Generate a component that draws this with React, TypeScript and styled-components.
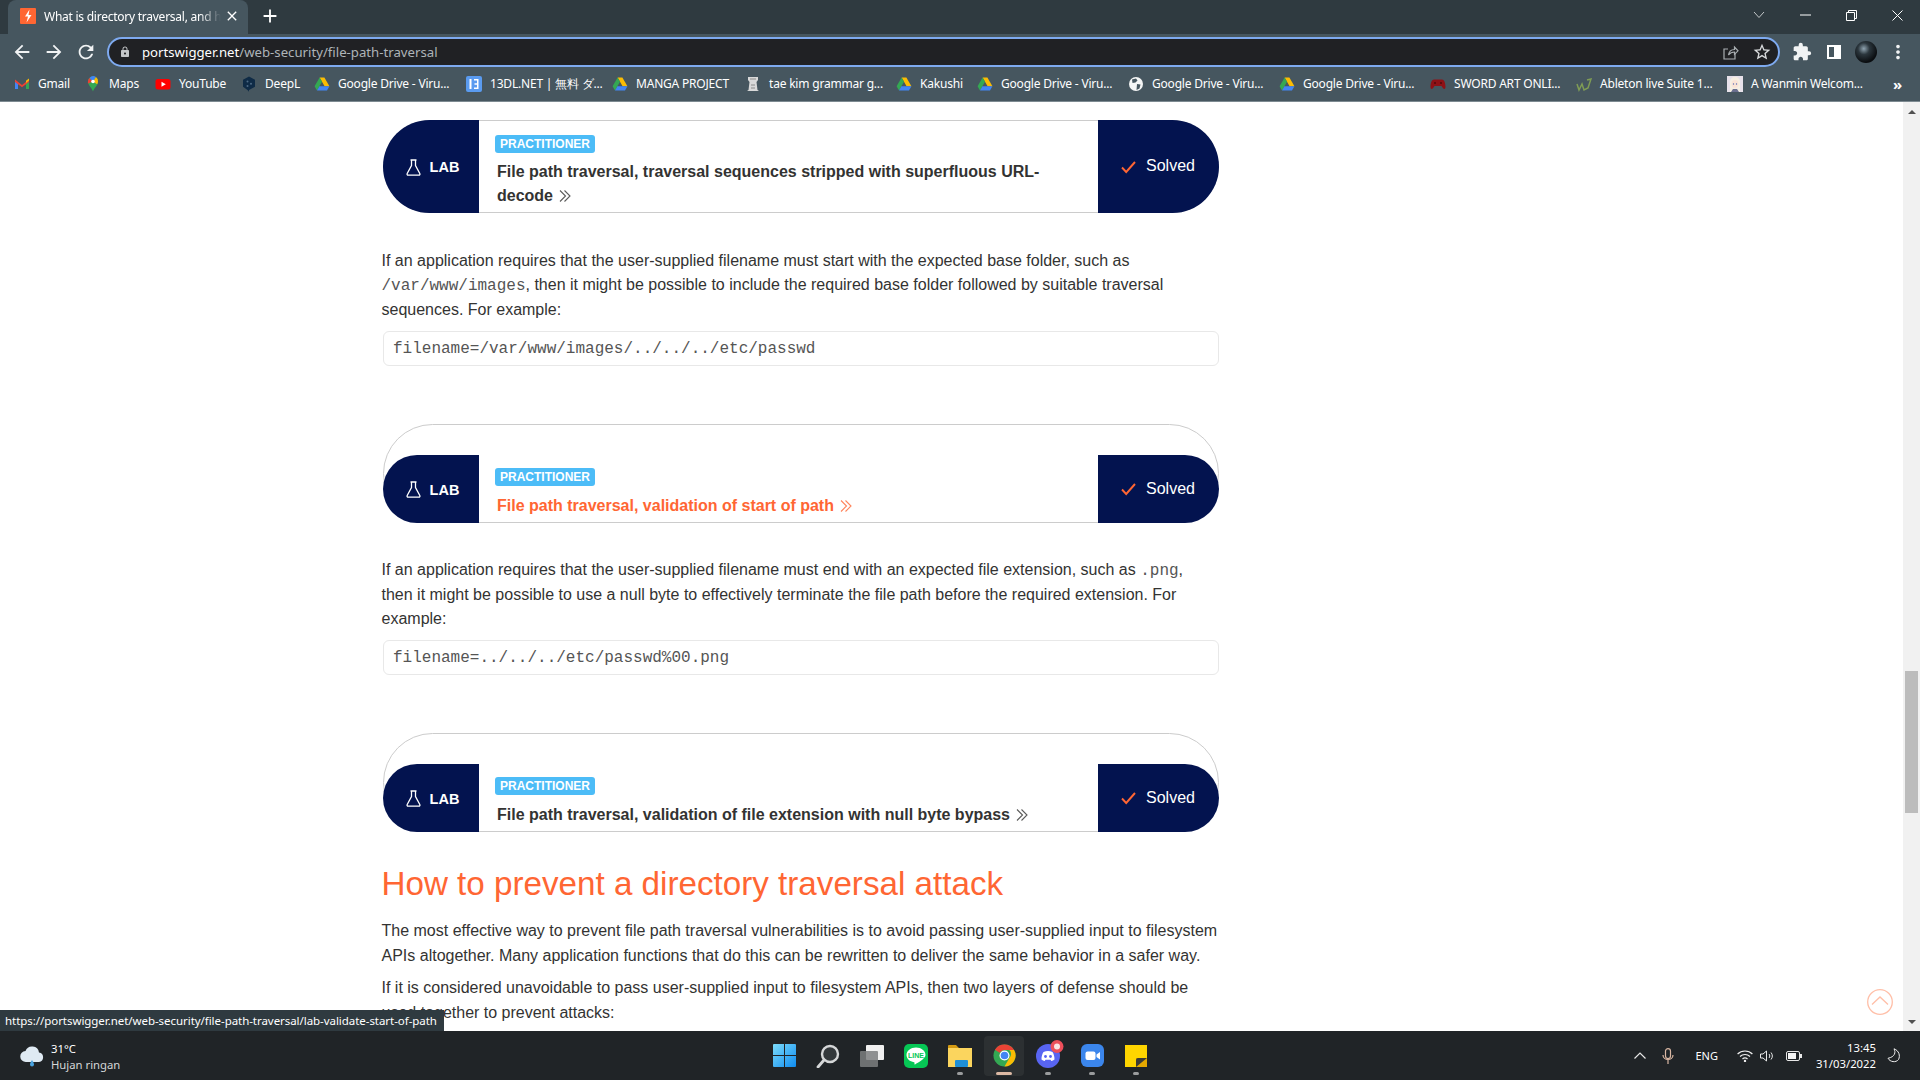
import styled, { createGlobalStyle } from 'styled-components';
import { MdArrowBack, MdArrowForward, MdRefresh, MdLock, MdStarBorder, MdExtension, MdMoreVert, MdClose, MdAdd } from 'react-icons/md';

const GlobalStyle = createGlobalStyle`
  html, body { margin: 0; padding: 0; background: #fff; }
  * { box-sizing: border-box; }
`

const uiFont = `"Noto Sans", "Open Sans", sans-serif`

const Screen = styled.div`
  width: 100%;
  height: 100vh;
  display: flex;
  flex-direction: column;
  overflow: hidden;
`

/* browser chrome */
const TabStrip = styled.div`
  height: 34px;
  flex: none;
  background: #2f3a40;
  display: flex;
  align-items: flex-end;
  padding-left: 8px;
  color: #fff;
  font: 12px ${uiFont};
`
const Tab = styled.div`
  width: 240px;
  height: 34px;
  background: #46565f;
  border-radius: 8px 8px 0 0;
  display: flex;
  align-items: center;
  padding: 0 8px 2px 12px;
  gap: 8px;
`
const TabTitle = styled.span`
  flex: 1;
  margin-right: -5px;
  white-space: nowrap;
  overflow: hidden;
  letter-spacing: -0.25px;
  -webkit-mask-image: linear-gradient(90deg, #000 88%, transparent);
  mask-image: linear-gradient(90deg, #000 88%, transparent);
`
const NewTab = styled.div`
  width: 22px;
  height: 34px;
  margin-left: 11px;
  display: flex;
  align-items: center;
  justify-content: center;
  font-size: 20px;
  padding-bottom: 2px;
`
const WindowControls = styled.div`
  margin-left: auto;
  height: 34px;
  display: flex;
  align-items: center;
  padding-bottom: 4px;
`
const WindowButton = styled.div`
  width: 46px;
  display: flex;
  justify-content: center;
  align-items: center;
`
const Toolbar = styled.div`
  height: 34px;
  flex: none;
  background: #46565f;
  display: flex;
  align-items: center;
  color: #fff;
  padding: 2px 0 0 6px;
`
const NavButton = styled.div`
  width: 32px;
  display: flex;
  justify-content: center;
  align-items: center;
  font-size: 22px;
  color: #f1f3f4;
`
const AddressBar = styled.div`
  width: 1673px;
  height: 30px;
  margin-left: 5px;
  border: 2px solid #7eaaf0;
  border-radius: 15px;
  background: #202124;
  display: flex;
  align-items: center;
  padding: 0 6px 0 10px;
  font: 13.2px ${uiFont};
  color: #aeb4b8;
`
const LockIcon = styled.span`
  display: flex;
  font-size: 12px;
  color: #c4c7c9;
  margin-right: 11px;
`
const UrlHost = styled.span`
  color: #fff;
`
const AddressActions = styled.div`
  margin-left: auto;
  display: flex;
  align-items: center;
  gap: 13px;
  color: #d8dadc;
  font-size: 20px;
`
const ToolActions = styled.div`
  display: flex;
  align-items: center;
  margin-left: 6px;
`
const Avatar = styled.div`
  width: 22px;
  height: 22px;
  border-radius: 50%;
  background: radial-gradient(circle at 40% 35%, #8fa3b0 0, #2b363d 30%, #0a0d10 70%);
`
const BookmarksBar = styled.div`
  height: 34px;
  flex: none;
  background: #46565f;
  display: flex;
  align-items: center;
  padding: 0 0 2px 14px;
  gap: 16px;
  border-bottom: 1px solid #7d8a91;
  color: #fff;
  font: 12px ${uiFont};
`
const Bookmark = styled.div`
  display: flex;
  align-items: center;
  gap: 8px;
`
const BookmarkLabel = styled.span<{ $w: number }>`
  width: ${({ $w }) => $w}px;
  white-space: nowrap;
  letter-spacing: -0.2px;
`
const MoreBookmarks = styled.span`
  margin-left: 16px;
  font-size: 15px;
  font-weight: 700;
`

/* page */
const Body = styled.div`
  flex: 1;
  min-height: 0;
  display: flex;
  position: relative;
`
const Main = styled.main`
  flex: 1;
  min-width: 0;
  overflow: hidden;
  padding: 18px 0 0 381.5px;
  background: #fff;
`
const Column = styled.div`
  width: 837px;
  color: #333332;
  font: 16px/24.4px "Liberation Sans", Arial, sans-serif;
`
const Card = styled.div<{ $first?: boolean }>`
  margin: ${({ $first }) => ($first ? 0 : 58)}px -0.5px 0 1.5px;
  height: ${({ $first }) => ($first ? 93 : 99)}px;
  border: 1px solid #ccc;
  border-radius: 50px;
  background: #fff;
  display: flex;
  align-items: ${({ $first }) => ($first ? 'stretch' : 'flex-end')};
`
const CardRow = styled.div<{ $first?: boolean }>`
  width: calc(100% + 2px);
  margin: ${({ $first }) => ($first ? -1 : 0)}px -1px -1px;
  display: flex;
  align-items: stretch;
`
const LabTag = styled.div`
  width: 96px;
  flex: none;
  background: #03134f;
  border-radius: 50px 0 0 50px;
  color: #fff;
  display: flex;
  align-items: center;
  justify-content: center;
  gap: 9px;
  padding: 1px 0 0 3px;
  font-size: 14.5px;
  font-weight: 700;
`
const SolvedTag = styled.div`
  width: 121px;
  flex: none;
  background: #03134f;
  border-radius: 0 50px 50px 0;
  color: #fff;
  display: flex;
  align-items: center;
  gap: 10px;
  padding-left: 23px;
  font-size: 16px;
`
const CardBody = styled.div<{ $first?: boolean }>`
  flex: 1;
  padding: ${({ $first }) => ($first ? '15px 40px 4px 16px' : '13px 40px 5px 16px')};
`
const Badge = styled.span`
  display: block;
  width: 100px;
  height: 18px;
  background: #4cbcf7;
  border-radius: 3px;
  color: #fff;
  font-size: 12px;
  font-weight: 700;
  line-height: 18px;
  text-align: center;
`
const CardTitle = styled.a<{ $active?: boolean; $first?: boolean }>`
  display: block;
  margin: ${({ $first }) => ($first ? 7 : 8)}px 0 0 2px;
  font-weight: 700;
  font-size: 16px;
  line-height: 24px;
  color: ${({ $active }) => ($active ? '#ff6633' : '#333332')};
`
const Chevrons = styled.svg`
  width: 14px;
  height: 14px;
  margin-left: 5px;
  vertical-align: -2px;
  fill: none;
  stroke: currentColor;
  stroke-width: 1.1;
  opacity: 0.8;
`
const Para = styled.p<{ $after?: number }>`
  margin: ${({ $after }) => $after ?? 0}px 0 0;
`
const InlineCode = styled.code`
  font: 16px "Liberation Mono", "Courier New", monospace;
  color: #555;
`
const CodeBox = styled.pre`
  margin: 9px -0.5px 0 1.5px;
  height: 35px;
  border: 1px solid #e8e8e8;
  border-radius: 6px;
  padding: 0 9px;
  font: 16px/35px "Liberation Mono", "Courier New", monospace;
  color: #555;
`
const Heading = styled.h2`
  margin: 30px 0 0;
  font-size: 33.2px;
  line-height: 44px;
  font-weight: 400;
  color: #ff6633;
`

const ScrollBar = styled.div`
  width: 17px;
  flex: none;
  background: #f1f1f1;
  display: flex;
  flex-direction: column;
  align-items: center;
  justify-content: space-between;
  padding: 8px 0 7px;
`
const ScrollThumb = styled.div`
  width: 13px;
  height: 142px;
  background: #bcbcbc;
  margin-top: 557px;
  margin-bottom: auto;
`
const ArrowUp = styled.div`
  width: 0;
  height: 0;
  border: 4.5px solid transparent;
  border-top: 0;
  border-bottom: 4px solid #505050;
`
const ArrowDown = styled.div`
  width: 0;
  height: 0;
  border: 4.5px solid transparent;
  border-bottom: 0;
  border-top: 4px solid #505050;
`
const StatusBubble = styled.div`
  position: absolute;
  left: 0;
  bottom: 0;
  height: 21px;
  width: 444px;
  background: #2f3a40;
  color: #fff;
  font: 11.5px/21px ${uiFont};
  padding-left: 5px;
  white-space: nowrap;
  letter-spacing: -0.05px;
`
const BackToTop = styled.svg`
  position: absolute;
  right: 27px;
  bottom: 16px;
  width: 26px;
  height: 26px;
  fill: none;
  stroke: #ffbfa8;
  stroke-width: 1.3;
`

/* windows taskbar */
const Taskbar = styled.footer`
  height: 49px;
  flex: none;
  background: #202427;
  color: #fff;
  display: grid;
  grid-template-columns: 1fr auto 1fr;
  align-items: center;
  font: 11px ${uiFont};
`
const Weather = styled.div`
  display: flex;
  align-items: center;
  gap: 7px;
  padding-left: 20px;
`
const WeatherText = styled.div`
  line-height: 16px;
  margin-top: 2px;
  font-size: 11.3px;
`
const WeatherSub = styled.div`
  color: #d4d6d7;
`
const TaskIcons = styled.div`
  display: flex;
  align-items: center;
  gap: 4px;
`
const TaskIcon = styled.div<{ $active?: boolean; $open?: boolean }>`
  width: 40px;
  height: 40px;
  margin-top: 1px;
  border-radius: 4px;
  position: relative;
  display: flex;
  align-items: center;
  justify-content: center;
  padding-bottom: 1px;
  background: ${({ $active }) => ($active ? '#2c3032' : 'transparent')};
  &::after {
    content: '';
    display: ${({ $open }) => ($open ? 'block' : 'none')};
    position: absolute;
    bottom: 1px;
    left: 50%;
    transform: translateX(-50%);
    width: ${({ $active }) => ($active ? 16 : 6)}px;
    height: 3px;
    border-radius: 2px;
    background: ${({ $active }) => ($active ? '#dcb9a4' : '#9a9c9d')};
  }
`
const Tray = styled.div`
  display: flex;
  align-items: center;
  justify-content: flex-end;
  padding-right: 20px;
  font-size: 11.5px;
`
const TrayIcon = styled.div<{ $gap: number }>`
  display: flex;
  margin-left: ${({ $gap }) => $gap}px;
`
const TrayLabel = styled.span`
  margin-left: 21px;
  font-size: 11px;
`
const Clock = styled.div`
  margin-left: 14px;
  text-align: right;
  line-height: 16px;
  font-size: 11.3px;
`

const Drive = () => (
  <svg width="16" height="16" viewBox="0 0 16 16">
    <path d="M5.6 1.5h4.8l5 8.7h-4.8z" fill="#fbbc04" />
    <path d="M5.6 1.5 .6 10.2l2.4 4.2 5-8.7z" fill="#34a853" />
    <path d="M3 14.4h10l2.4-4.2H5.4z" fill="#4285f4" />
  </svg>
)
const Gmail = () => (
  <svg width="16" height="16" viewBox="0 0 16 16">
    <path d="M1 4v9h3V7z" fill="#4285f4" />
    <path d="M15 4v9h-3V7z" fill="#34a853" />
    <path d="M1 3.5 8 9l7-5.5V6L8 11.3 1 6z" fill="#ea4335" />
    <path d="M12 7 15 4.500V2.500L12 4.800z" fill="#fbbc04" />
  </svg>
)
const MapsPin = () => (
  <svg width="16" height="16" viewBox="0 0 16 16">
    <path d="M8 15.500C7 12 3 9.500 3 5.500a5 5 0 0 1 10 0c0 4-4 6.500-5 10z" fill="#34a853" />
    <path d="M4.500 2 8 5.500 3 7.500c-.4-2.300.2-4.200 1.500-5.500z" fill="#ea4335" />
    <path d="M4.500 2A5 5 0 0 1 11 1l-3 4.500z" fill="#4285f4" />
    <path d="M11 1a5 5 0 0 1 2 4.500c0 1-.4 2-.8 2.800L8 5.500z" fill="#fbbc04" />
    <circle cx="8" cy="5.500" r="1.800" fill="#fff" />
  </svg>
)
const YouTube = () => (
  <svg width="16" height="16" viewBox="0 0 16 16">
    <rect x="0.500" y="3" width="15" height="10.500" rx="2.500" fill="#f00" />
    <path d="M6.500 5.800v5l4.300-2.500z" fill="#fff" />
  </svg>
)
const DeepL = () => (
  <svg width="16" height="16" viewBox="0 0 16 16">
    <path d="M8 .5 14 3.800v7L8 14v1.800L6.500 14 2 10.800v-7z" fill="#0f2b46" />
    <circle cx="6.500" cy="5.500" r="1" fill="#4d6a85" />
    <circle cx="6.500" cy="10" r="1" fill="#4d6a85" />
    <circle cx="10" cy="7.800" r="1" fill="#4d6a85" />
  </svg>
)
const ThirteenDl = () => (
  <svg width="16" height="16" viewBox="0 0 16 16">
    <rect width="16" height="16" rx="2" fill="#5a9bf0" />
    <path d="M3.500 3h2v10h-2zM8 3h4.500v10H8v-1.500h3V8.700H8.500V7.300H11V4.500H8z" fill="#fff" />
  </svg>
)
const TaeKim = () => (
  <svg width="16" height="16" viewBox="0 0 16 16">
    <path d="M3 1h10v3l-1.500 2 1 8 1.500 1H2l1.500-1 1-8L3 4z" fill="#d9d9d9" />
    <path d="M5 3h6M6 9h4M6 12h4" stroke="#8a8a8a" />
  </svg>
)
const Globe = () => (
  <svg width="16" height="16" viewBox="0 0 16 16">
    <circle cx="8" cy="8" r="7" fill="#f4f5f5" />
    <path d="M4 3.500 8 2.500l1.500 2-2 2-3 .500zM9 8l3.500.5-1 4-3 1.500z" fill="#46565f" />
  </svg>
)
const Gamepad = () => (
  <svg width="16" height="16" viewBox="0 0 16 16">
    <path d="M4 3.500h8c2 0 3.500 3 3.500 7.500 0 2.500-2 2.500-3 .500l-1-1.500h-7l-1 1.500c-1 2-3 2-3-.500C.5 6.500 2 3.500 4 3.500z" fill="#8f1116" />
    <circle cx="5" cy="7" r="1" fill="#4f0a0c" />
    <circle cx="11" cy="7" r="1" fill="#4f0a0c" />
  </svg>
)
const Ableton = () => (
  <svg width="16" height="16" viewBox="0 0 16 16" fill="none" stroke="#7f9c55" strokeWidth="1.500">
    <path d="M1 8l2 6 3-6 2 6 4-2 3-9-4 1" />
  </svg>
)
const AnimeThumb = () => (
  <svg width="16" height="16" viewBox="0 0 16 16">
    <rect width="16" height="16" fill="#e6e1ea" />
    <path d="M3 16V6c0-3 2-5 5-5s5 2 5 5v10z" fill="#f6efe3" />
    <ellipse cx="8" cy="8" rx="3.500" ry="4" fill="#fbe4d6" />
    <circle cx="6.500" cy="8" r=".7" fill="#5a6fb5" />
    <circle cx="9.500" cy="8" r=".7" fill="#5a6fb5" />
    <path d="M4 16l2-3h4l2 3z" fill="#6a6f8f" />
  </svg>
)
const TabIcon = () => (
  <svg width="16" height="16" viewBox="0 0 16 16">
    <rect width="16" height="16" rx="1" fill="#ff6633" />
    <path d="M9.500 1.500 5 8.500h3L6.500 14.500 11.500 7H8.500z" fill="#fff" />
  </svg>
)
const ShareIcon = () => (
  <svg width="17" height="17" viewBox="0 0 17 17" fill="none" stroke="#a9aeb1" strokeWidth="1.200">
    <path d="M13 9.500V15H2V5h4" />
    <path d="M6.500 11c.5-3.500 3-5.500 6-5.500V3l3.500 3.800-3.500 3.500V8c-2.500 0-4.500 1-6 3z" />
  </svg>
)
const SidePanelIcon = () => (
  <svg width="14" height="14" viewBox="0 0 14 14">
    <path d="M0 0h14v14H0zM2 2v10h5V2z" fill="#fff" fillRule="evenodd" />
  </svg>
)
const Flask = () => (
  <svg width="15" height="17" viewBox="0 0 15 17" fill="none" stroke="#fff" strokeWidth="1.300">
    <path d="M4.500 1h6M5.500 1v5.500L1.200 14.500c-.4.800 0 1.700 1 1.700h10.600c1 0 1.400-.9 1-1.700L9.500 6.500V1" />
  </svg>
)
const Check = () => (
  <svg width="15" height="14" viewBox="0 0 15 14" fill="none" stroke="#ff6633" strokeWidth="1.900">
    <path d="M1 7.500 5.200 12 14 2" />
  </svg>
)
const DoubleChevron = () => (
  <Chevrons viewBox="0 0 14 14">
    <path d="M2 1.500 7.500 7 2 12.500M6.500 1.500 12 7l-5.500 5.500" />
  </Chevrons>
)
const CloudRain = () => (
  <svg width="24" height="26" viewBox="0 0 24 26">
    <path d="M6 19a5.500 5.500 0 0 1-.5-11A7 7 0 0 1 19 9.500 4.800 4.800 0 0 1 19 19z" fill="#dfeaf3" />
    <path d="M12 17c1.500 2.500 2 3.500 2 4.500a2 2 0 0 1-4 0c0-1 .5-2 2-4.500z" fill="#4aa3df" />
  </svg>
)
const WinLogo = () => (
  <svg width="23" height="23" viewBox="0 0 23 23">
    <defs>
      <linearGradient id="win" x1="0" y1="0" x2="1" y2="1">
        <stop offset="0" stopColor="#7cdcfb" />
        <stop offset="1" stopColor="#0f8cf0" />
      </linearGradient>
    </defs>
    <path d="M1 0h10v11H0V1a1 1 0 0 1 1-1zM12 0h10a1 1 0 0 1 1 1v10H12zM0 12h11v11H1a1 1 0 0 1-1-1zM12 12h11v10a1 1 0 0 1-1 1H12z" fill="url(#win)" />
  </svg>
)
const SearchGlass = () => (
  <svg width="24" height="24" viewBox="0 0 24 24" fill="none">
    <circle cx="14" cy="10" r="8" stroke="#d5d7d8" strokeWidth="2.400" fill="#33383b" />
    <path d="M8 16 2 23" stroke="#d5d7d8" strokeWidth="2.800" strokeLinecap="round" />
  </svg>
)
const TaskView = () => (
  <svg width="24" height="22" viewBox="0 0 24 22">
    <rect x="6" y="0" width="18" height="15" rx="1" fill="#f0f0f0" />
    <rect x="0" y="6" width="18" height="16" rx="1" fill="#7d7f80" fillOpacity="0.85" />
  </svg>
)
const LineApp = () => (
  <svg width="24" height="24" viewBox="0 0 24 24">
    <rect width="24" height="24" rx="5" fill="#06c755" />
    <path d="M12 3.500c-5.200 0-9.500 3.300-9.500 7.500 0 3.700 3.300 6.600 7.500 7.200.7.100.6.700.4 1.800 0 .6.400.6 1 .2 2.200-1.300 10.100-5.500 10.100-9.200 0-4.200-4.300-7.500-9.500-7.500z" fill="#fff" />
    <text x="12" y="13.500" fontSize="7" fontWeight="700" fill="#06c755" textAnchor="middle" fontFamily="Liberation Sans">LINE</text>
  </svg>
)
const Explorer = () => (
  <svg width="24" height="22" viewBox="0 0 24 22">
    <path d="M0 1a1 1 0 0 1 1-1h7l3 3h13v3H0z" fill="#d49a12" />
    <rect y="3" width="24" height="19" fill="#fbd55e" />
    <rect x="7" y="15" width="13" height="7" rx="1" fill="#1f8fd6" />
  </svg>
)
const ChromeLogo = () => (
  <svg width="23" height="23" viewBox="0 0 48 48">
    <circle cx="24" cy="24" r="23" fill="#34a853" />
    <path d="M24 1a23 23 0 0 1 20 11.500H24a11.500 11.500 0 0 0-10 5.800L4 12A23 23 0 0 1 24 1z" fill="#ea4335" />
    <path d="M44 12.500A23 23 0 0 1 24 47l10-17.500a11.500 11.500 0 0 0 0-17z" fill="#fbbc04" />
    <circle cx="24" cy="24" r="10.500" fill="#fff" />
    <circle cx="24" cy="24" r="8" fill="#4285f4" />
  </svg>
)
const DiscordApp = () => (
  <svg width="24" height="24" viewBox="0 0 24 24" overflow="visible">
    <circle cx="12" cy="12" r="12" fill="#5865f2" />
    <path d="M7.500 8c3-1.300 6-1.300 9 0 1.300 2 2 4.500 2 7.500-1 .8-2 1.300-3.200 1.600l-.8-1.300h-5l-.8 1.300c-1.200-.3-2.200-.8-3.200-1.600 0-3 .7-5.500 2-7.500z" fill="#fff" />
    <circle cx="9.500" cy="12.500" r="1.400" fill="#5865f2" />
    <circle cx="14.500" cy="12.500" r="1.400" fill="#5865f2" />
    <circle cx="21" cy="2.500" r="6.500" fill="#ed4f5a" />
    <circle cx="21" cy="2.500" r="3" fill="#fbe4e4" />
  </svg>
)
const ZoomApp = () => (
  <svg width="23" height="23" viewBox="0 0 23 23">
    <rect width="23" height="23" rx="6" fill="#3b86ec" />
    <rect x="4.500" y="7.500" width="10" height="8.500" rx="2" fill="#fff" />
    <path d="m15.500 10.500 3.500-2.500v7.500L15.500 13z" fill="#fff" />
  </svg>
)
const Sticky = () => (
  <svg width="22" height="22" viewBox="0 0 22 22">
    <path d="M0 0h22v13l-9 9H0z" fill="#ffd500" />
    <path d="M11 22V13h11v9z" fill="#e5a800" />
    <path d="M11 22v-7a2 2 0 0 1 2-2h9z" fill="#3a3a36" />
  </svg>
)

const bookmarks = [
  { icon: <Gmail />, label: 'Gmail', w: 31 },
  { icon: <MapsPin />, label: 'Maps', w: 30 },
  { icon: <YouTube />, label: 'YouTube', w: 46 },
  { icon: <DeepL />, label: 'DeepL', w: 33 },
  { icon: <Drive />, label: 'Google Drive - Viru...', w: 112 },
  { icon: <ThirteenDl />, label: '13DL.NET | 無料 ダ...', w: 106 },
  { icon: <Drive />, label: 'MANGA PROJECT', w: 93 },
  { icon: <TaeKim />, label: 'tae kim grammar g...', w: 111 },
  { icon: <Drive />, label: 'Kakushi', w: 41 },
  { icon: <Drive />, label: 'Google Drive - Viru...', w: 111 },
  { icon: <Globe />, label: 'Google Drive - Viru...', w: 111 },
  { icon: <Drive />, label: 'Google Drive - Viru...', w: 111 },
  { icon: <Gamepad />, label: 'SWORD ART ONLI...', w: 106 },
  { icon: <Ableton />, label: 'Ableton live Suite 1...', w: 111 },
  { icon: <AnimeThumb />, label: 'A Wanmin Welcom...', w: 110 },
]

function LabCard({ title, active, first }: { title: string; active?: boolean; first?: boolean }) {
  return (
    <Card $first={first}>
      <CardRow $first={first}>
        <LabTag>
          <Flask />
          LAB
        </LabTag>
        <CardBody $first={first}>
          <Badge>PRACTITIONER</Badge>
          <CardTitle $active={active} $first={first}>
            {title}
            <DoubleChevron />
          </CardTitle>
        </CardBody>
        <SolvedTag>
          <Check />
          Solved
        </SolvedTag>
      </CardRow>
    </Card>
  );
}

function App() {
  return (
    <Screen>
      <GlobalStyle />
      <TabStrip>
        <Tab>
          <TabIcon />
          <TabTitle>What is directory traversal, and h</TabTitle>
          <MdClose size={16} />
        </Tab>
        <NewTab>
          <MdAdd size={22} />
        </NewTab>
        <WindowControls>
          <WindowButton>
            <svg width="12" height="8" viewBox="0 0 12 8" fill="none" stroke="#c4c8ca"><path d="m1 1 5 5.500L11 1" /></svg>
          </WindowButton>
          <WindowButton>
            <svg width="11" height="2" viewBox="0 0 11 2"><path d="M0 1h11" stroke="#fff" /></svg>
          </WindowButton>
          <WindowButton>
            <svg width="11" height="11" viewBox="0 0 11 11" fill="none" stroke="#fff"><path d="M.5 2.500h8v8h-8zM2.500 2.500v-2h8v8h-2" /></svg>
          </WindowButton>
          <WindowButton>
            <svg width="11" height="11" viewBox="0 0 11 11" fill="none" stroke="#fff"><path d="m.5.500 10 10M10.500.500l-10 10" /></svg>
          </WindowButton>
        </WindowControls>
      </TabStrip>
      <Toolbar>
        <NavButton><MdArrowBack /></NavButton>
        <NavButton><MdArrowForward /></NavButton>
        <NavButton><MdRefresh /></NavButton>
        <AddressBar>
          <LockIcon><MdLock /></LockIcon>
          <UrlHost>portswigger.net</UrlHost>/web-security/file-path-traversal
          <AddressActions>
            <ShareIcon />
            <MdStarBorder />
          </AddressActions>
        </AddressBar>
        <ToolActions>
          <NavButton><MdExtension size={20} /></NavButton>
          <NavButton><SidePanelIcon /></NavButton>
          <NavButton><Avatar /></NavButton>
          <NavButton><MdMoreVert /></NavButton>
        </ToolActions>
      </Toolbar>
      <BookmarksBar>
        {bookmarks.map((b, i) => (
          <Bookmark key={i}>
            {b.icon}
            <BookmarkLabel $w={b.w}>{b.label}</BookmarkLabel>
          </Bookmark>
        ))}
        <MoreBookmarks>»</MoreBookmarks>
      </BookmarksBar>

      <Body>
        <Main>
          <Column>
            <LabCard first title="File path traversal, traversal sequences stripped with superfluous URL-decode" />
            <Para $after={36}>
              If an application requires that the user-supplied filename must start with the expected base folder, such as{' '}
              <InlineCode>/var/www/images</InlineCode>, then it might be possible to include the required base folder followed by suitable traversal sequences. For example:
            </Para>
            <CodeBox>filename=/var/www/images/../../../etc/passwd</CodeBox>
            <LabCard active title="File path traversal, validation of start of path" />
            <Para $after={35}>
              If an application requires that the user-supplied filename must end with an expected file extension, such as <InlineCode>.png</InlineCode>, then it might be possible to use a null byte to effectively terminate the file path before the required extension. For example:
            </Para>
            <CodeBox>filename=../../../etc/passwd%00.png</CodeBox>
            <LabCard title="File path traversal, validation of file extension with null byte bypass" />
            <Heading>How to prevent a directory traversal attack</Heading>
            <Para $after={13}>
              The most effective way to prevent file path traversal vulnerabilities is to avoid passing user-supplied input to filesystem APIs altogether. Many application functions that do this can be rewritten to deliver the same behavior in a safer way.
            </Para>
            <Para $after={8}>
              If it is considered unavoidable to pass user-supplied input to filesystem APIs, then two layers of defense should be used together to prevent attacks:
            </Para>
          </Column>
        </Main>
        <ScrollBar>
          <ArrowUp />
          <ScrollThumb />
          <ArrowDown />
        </ScrollBar>
        <BackToTop viewBox="0 0 26 26">
          <circle cx="13" cy="13" r="12.300" />
          <path d="m5 15.500 8-7.500 8 7.500" />
        </BackToTop>
        <StatusBubble>https://portswigger.net/web-security/file-path-traversal/lab-validate-start-of-path</StatusBubble>
      </Body>

      <Taskbar>
        <Weather>
          <CloudRain />
          <WeatherText>
            <div>31°C</div>
            <WeatherSub>Hujan ringan</WeatherSub>
          </WeatherText>
        </Weather>
        <TaskIcons>
          <TaskIcon><WinLogo /></TaskIcon>
          <TaskIcon><SearchGlass /></TaskIcon>
          <TaskIcon><TaskView /></TaskIcon>
          <TaskIcon><LineApp /></TaskIcon>
          <TaskIcon $open><Explorer /></TaskIcon>
          <TaskIcon $open $active><ChromeLogo /></TaskIcon>
          <TaskIcon $open><DiscordApp /></TaskIcon>
          <TaskIcon $open><ZoomApp /></TaskIcon>
          <TaskIcon $open><Sticky /></TaskIcon>
        </TaskIcons>
        <Tray>
          <TrayIcon $gap={0}>
            <svg width="12" height="7" viewBox="0 0 12 7" fill="none" stroke="#e8e8e8" strokeWidth="1.200"><path d="m.5 6.500 5.500-5.500 5.500 5.500" /></svg>
          </TrayIcon>
          <TrayIcon $gap={16}>
            <svg width="12" height="16" viewBox="0 0 12 16" fill="none" stroke="#d9b7a3" strokeWidth="1.200"><rect x="3.500" y=".6" width="5" height="10" rx="2.500" /><path d="M1 7c0 6 10 6 10 0M6 12v4" /></svg>
          </TrayIcon>
          <TrayLabel>ENG</TrayLabel>
          <TrayIcon $gap={19}>
            <svg width="16" height="12" viewBox="0 0 16 12" fill="none" stroke="#f0f0f0" strokeWidth="1.200"><path d="M.6 4c4-4 10.800-4 14.800 0M3 6.500c2.800-2.700 7.200-2.700 10 0M5.500 9c1.400-1.300 3.600-1.300 5 0" /><circle cx="8" cy="11" r=".6" /></svg>
          </TrayIcon>
          <TrayIcon $gap={7}>
            <svg width="16" height="12" viewBox="0 0 16 12" fill="none" stroke="#e8e8e8" strokeWidth="1"><path d="M.5 4h2.500L6.500 1v10L3 8H.5zM9 4c1 1 1 3 0 4M11 2.500c1.800 2 1.800 5 0 7" /></svg>
          </TrayIcon>
          <TrayIcon $gap={10}>
            <svg width="16" height="10" viewBox="0 0 16 10"><rect x=".5" y=".5" width="13" height="9" rx="1.500" fill="none" stroke="#e8e8e8" /><rect x="2" y="2" width="8" height="6" fill="#f4f4f4" /><rect x="14" y="3" width="2" height="4" fill="#e8e8e8" /></svg>
          </TrayIcon>
          <Clock>
            <div>13:45</div>
            <div>31/03/2022</div>
          </Clock>
          <TrayIcon $gap={11}>
            <svg width="13" height="15" viewBox="0 0 13 15" fill="none" stroke="#f0f0f0" strokeWidth="1"><path d="M7 .8c2 3.500 1 8-6 9.500C3 14 9 15 11.500 11.500 13.500 8 12 2.500 7 .8z" /></svg>
          </TrayIcon>
        </Tray>
      </Taskbar>
    </Screen>
  );
}

export default App;
